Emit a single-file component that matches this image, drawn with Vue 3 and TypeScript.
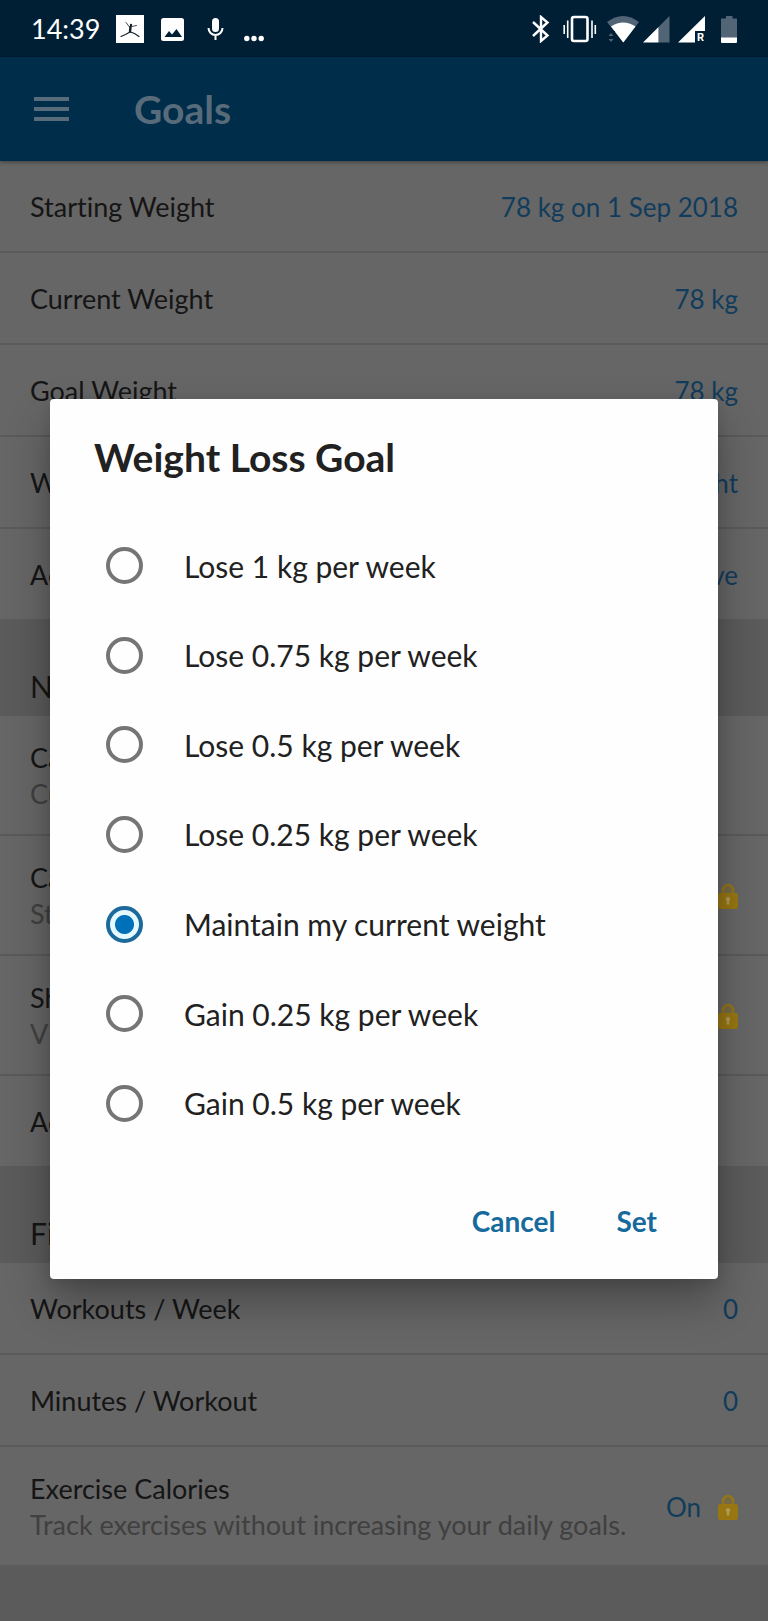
<script setup lang="ts">
import { ref } from 'vue'

interface GoalRow {
  label: string
  detail?: string
  value?: string
  locked?: boolean
}

interface GoalGroup {
  title?: string
  rows: GoalRow[]
}

const groups: GoalGroup[] = [
  {
    rows: [
      { label: 'Starting Weight', value: '78 kg on 1 Sep 2018' },
      { label: 'Current Weight', value: '78 kg' },
      { label: 'Goal Weight', value: '78 kg' },
      { label: 'Weekly Goal', value: 'Maintain weight' },
      { label: 'Activity Level', value: 'Active' },
    ],
  },
  {
    title: 'Nutrition Goals',
    rows: [
      { label: 'Calorie Goals', detail: 'Customise your daily goals.' },
      { label: 'Calorie Goals by Meal', detail: 'Stay on track at each meal.', locked: true },
      { label: 'Show Macros by Meal', detail: 'View macros by meal.', locked: true },
      { label: 'Additional Goals' },
    ],
  },
  {
    title: 'Fitness Goals',
    rows: [
      { label: 'Workouts / Week', value: '0' },
      { label: 'Minutes / Workout', value: '0' },
      {
        label: 'Exercise Calories',
        detail: 'Track exercises without increasing your daily goals.',
        value: 'On',
        locked: true,
      },
    ],
  },
]

const options: string[] = [
  'Lose 1 kg per week',
  'Lose 0.75 kg per week',
  'Lose 0.5 kg per week',
  'Lose 0.25 kg per week',
  'Maintain my current weight',
  'Gain 0.25 kg per week',
  'Gain 0.5 kg per week',
]

const selected = ref<string>('Maintain my current weight')
</script>

<template>
  <div class="screen">
    <div class="status">
      <div class="status-left">
        <span class="time">14:39</span>
        <svg width="28" height="28" viewBox="0 0 28 28" aria-hidden="true">
          <rect width="28" height="28" fill="#fff" />
          <g fill="none" stroke="#14202a" stroke-linecap="round" stroke-linejoin="round">
            <path d="M10 7.500 L13.500 12 L20.500 10.500" stroke-width="0.800" />
            <path d="M14.500 12 L14 16.500" stroke-width="2.400" />
            <path d="M14 17 L9.500 19.500 L5 21.500" stroke-width="1.200" />
            <path d="M14.500 17 L18.500 18.500 L23 21.500" stroke-width="1.200" />
          </g>
          <circle cx="15" cy="10" r="1.200" fill="#14202a" />
        </svg>
        <svg width="26" height="28" viewBox="0 0 26 28" aria-hidden="true">
          <rect x="1" y="3" width="23" height="23" rx="2.500" fill="#fff" />
          <path d="M4.500 22 L9 16 L12 19.500 L16.500 14 L22 22 Z" fill="#001f35" />
        </svg>
        <svg width="26" height="28" viewBox="0 0 26 28" aria-hidden="true">
          <rect x="10" y="3" width="7" height="14" rx="3.500" fill="#fff" />
          <path d="M6.500 13 a7 7 0 0 0 14 0 M13.500 20 V25" fill="none" stroke="#fff" stroke-width="2" />
        </svg>
        <svg width="20" height="28" viewBox="0 0 20 28" aria-hidden="true" fill="#fff">
          <circle cx="2.800" cy="23.500" r="2.700" />
          <circle cx="10" cy="23.500" r="2.700" />
          <circle cx="17.200" cy="23.500" r="2.700" />
        </svg>
      </div>
      <div class="status-right">
        <svg width="27" height="28" viewBox="0 0 27 28" aria-hidden="true">
          <path d="M1 7 L15.500 20.500 L9 26 V2 L15.500 7.500 L1 21" fill="none" stroke="#fff" stroke-width="2.400" />
        </svg>
        <svg width="40" height="28" viewBox="0 0 40 28" aria-hidden="true" fill="none" stroke="#fff">
          <rect x="9" y="2" width="15.500" height="24" rx="2" stroke-width="2.600" />
          <path d="M1.200 10 V19 M4.700 5.500 V23 M29 5.500 V23 M32.300 10 V19" stroke-width="1.600" />
        </svg>
        <svg width="32" height="28" viewBox="0 0 32 28" aria-hidden="true">
          <path d="M0 7 Q16 -5 32 7 L16.300 27.500 Z" fill="#516577" />
          <path d="M4 11.500 Q16 3.500 28.500 11.500 L16.300 27.500 Z" fill="#fff" />
          <path d="M0 16 H8 V28 H0 Z" fill="#001f35" />
          <path d="M1.500 21 L4 18 L6.500 21 Z M1.500 24 L4 27 L6.500 24 Z" fill="#516577" />
        </svg>
        <svg width="31" height="28" viewBox="0 0 31 28" aria-hidden="true">
          <path d="M26.500 1 V27.500 H15.500 V12 Z" fill="#516577" />
          <path d="M15.500 12 V27.500 H0 Z" fill="#fff" />
        </svg>
        <svg class="overflowing" width="27" height="28" viewBox="0 0 27 28" aria-hidden="true">
          <path d="M27 1 V16 H17 V27.500 H0 Z" fill="#fff" />
          <text x="19" y="26" class="roaming">R</text>
        </svg>
        <svg width="28" height="28" viewBox="0 0 28 28" aria-hidden="true">
          <path d="M17 1 H23.500 V3.500 H28 V28 H12 V3.500 H17 Z" fill="#516577" />
          <path d="M12 22.500 H28 V26.500 Q28 28 26.500 28 H13.500 Q12 28 12 26.500 Z" fill="#fff" />
        </svg>
      </div>
    </div>

    <header class="appbar">
      <button class="menu" type="button" aria-label="Menu">
        <span></span><span></span><span></span>
      </button>
      <h1>Goals</h1>
    </header>

    <main>
      <section v-for="(group, g) in groups" :key="g">
        <h2 v-if="group.title">{{ group.title }}</h2>
        <ul>
          <li v-for="row in group.rows" :key="row.label" :class="{ tall: row.detail }">
            <div class="copy">
              <span class="label">{{ row.label }}</span>
              <span v-if="row.detail" class="detail">{{ row.detail }}</span>
            </div>
            <span v-if="row.value" class="value">{{ row.value }}</span>
            <svg v-if="row.locked" class="lock" width="20" height="26" viewBox="0 0 20 26" aria-hidden="true">
              <path d="M5 12 V7 a5 5 0 0 1 10 0 V12" fill="#75694a" stroke="#927618" stroke-width="2.600" />
              <rect y="10" width="20" height="16" rx="2" fill="#987612" />
              <path d="M10 14 a2.200 2.200 0 0 1 1.200 4 V21.500 H8.800 V18 A2.200 2.200 0 0 1 10 14 Z" fill="#b09a58" />
            </svg>
          </li>
        </ul>
      </section>
    </main>

    <div class="overlay">
      <form class="dialog" role="dialog" aria-labelledby="dialog-title" @submit.prevent>
        <h2 id="dialog-title" class="dialog-title">Weight Loss Goal</h2>
        <div class="options">
          <label v-for="option in options" :key="option" class="option">
            <input v-model="selected" type="radio" name="goal" :value="option" />
            <span>{{ option }}</span>
          </label>
        </div>
        <div class="actions">
          <button type="button">Cancel</button>
          <button type="submit">Set</button>
        </div>
      </form>
    </div>
  </div>
</template>

<style>
body {
  margin: 0;
  background: #5b5b5b;
}
</style>

<style scoped>
.screen {
  position: relative;
  min-height: 100vh;
  overflow: hidden;
  background: #5b5b5b;
  color: #151515;
  font-family: Lato, "Noto Sans", sans-serif;
  font-size: 27px;
  font-variant-ligatures: none;
  line-height: 36px;
}

.status {
  display: flex;
  justify-content: space-between;
  align-items: center;
  height: 57px;
  padding: 0 31px;
  box-sizing: border-box;
  background: #001f35;
  color: #fff;
}

.status-left,
.status-right {
  display: flex;
  align-items: center;
}

.status-left {
  gap: 16px;
}

.status-right {
  gap: 4px;
}

.overflowing {
  overflow: visible;
}

.roaming {
  fill: #fff;
  font-family: Roboto, sans-serif;
  font-size: 11px;
  font-weight: 700;
}

.appbar {
  position: relative;
  display: flex;
  align-items: center;
  gap: 65px;
  height: 104px;
  padding: 0 34px;
  background: #002d4a;
  box-shadow: 0 1px 4px rgba(0, 0, 0, 0.4);
}

.menu {
  display: flex;
  flex-direction: column;
  gap: 6px;
  width: 35px;
  padding: 0;
  border: 0;
  background: none;
}

.menu span {
  height: 4px;
  background: #586b7b;
}

h1 {
  margin: 0;
  color: #586b7b;
  font-size: 39px;
  font-weight: 700;
  line-height: 44px;
}

section h2 {
  margin: 0;
  padding: 49px 30px 12px;
  font-size: 30px;
  font-weight: 400;
  line-height: 36px;
}

ul {
  margin: 0;
  padding: 0;
  list-style: none;
}

li {
  display: flex;
  align-items: center;
  gap: 17px;
  min-height: 88px;
  padding: 2px 30px 0;
  background: #666;
  white-space: nowrap;
}

li.tall {
  min-height: 116px;
}

li + li {
  border-top: 2px solid #5a5a5a;
}

.copy {
  display: flex;
  flex: 1;
  flex-direction: column;
}

.detail {
  color: #404040;
}

.value {
  color: #123c5c;
  font-size: 26px;
}

.overlay {
  position: absolute;
  inset: 57px 0 0;
  display: flex;
  align-items: center;
  justify-content: center;
  padding: 0 50px;
}

.dialog {
  flex: 1;
  padding: 34px 44px 22px;
  border-radius: 4px;
  background: #fefefe;
  box-shadow: 0 22px 44px rgba(0, 0, 0, 0.3), 0 4px 12px rgba(0, 0, 0, 0.1);
  color: #212121;
}

.dialog-title {
  margin: 0 0 40px;
  font-size: 39px;
  font-weight: 700;
  line-height: 48px;
}

.options {
  display: grid;
  grid-auto-rows: 1fr;
  min-height: 627px;
}

.option {
  display: flex;
  align-items: center;
  gap: 41px;
  padding-left: 12px;
  font-size: 30px;
}

.option input {
  flex: none;
  width: 37px;
  height: 37px;
  margin: 0;
  border: 4px solid #757575;
  border-radius: 50%;
  appearance: none;
}

.option input:checked {
  border-color: #1c6a9b;
  background: radial-gradient(circle, #0070b8 9px, #e4f8ff 10px);
}

.actions {
  display: flex;
  justify-content: flex-end;
  gap: 61px;
  padding: 37px 17px 0 0;
}

.actions button {
  padding: 18px 0;
  border: 0;
  background: none;
  color: #176a9c;
  font: inherit;
  font-size: 28px;
  font-weight: 700;
}
</style>
